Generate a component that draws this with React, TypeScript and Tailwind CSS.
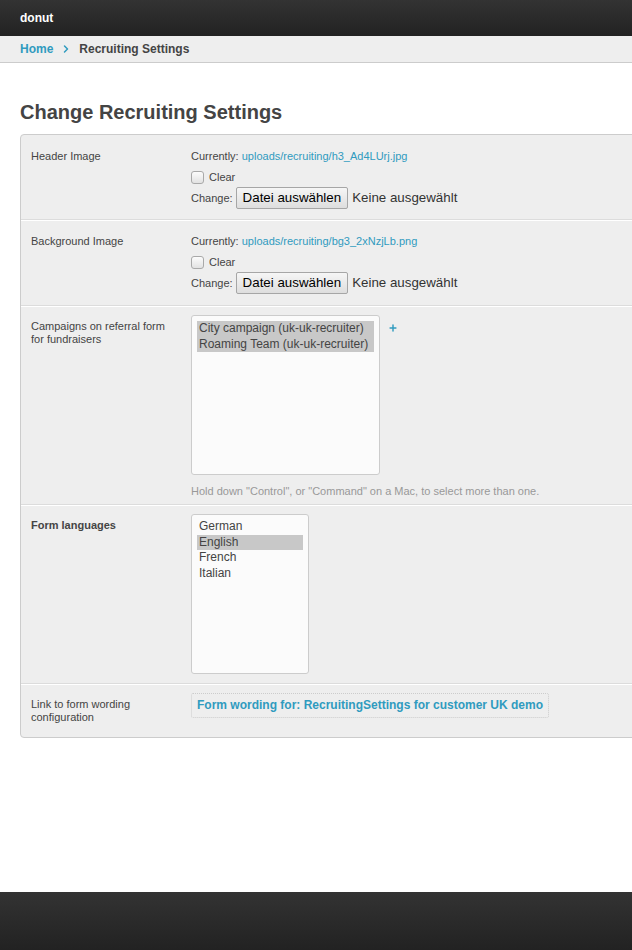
import { ChevronRight, Plus } from "lucide-react";

const font = { fontFamily: '"Liberation Sans", Arial, sans-serif' };

function Checkbox() {
    return <span className="inline-block w-[13px] h-[13px] rounded-[3px] border border-[#a9a9a9] bg-gradient-to-b from-[#fcfcfc] to-[#e2e2e2] mr-[5px]" />;
}

function FileInput() {
    return (
        <div className="flex items-center text-[11px] text-[#444]">
            <span className="mr-[3px]">Change:</span>
            <button className="h-[22px] px-[6px] border border-[#a6a6a6] rounded-[2px] bg-gradient-to-b from-[#f6f6f6] to-[#dedede] text-[13.33px] text-black leading-none">
                Datei auswählen
            </button>
            <span className="ml-[4px] text-[13.33px] text-[#333]">Keine ausgewählt</span>
        </div>
    );
}

function ImageRow({ label, file, first }: { label: string; file: string; first?: boolean }) {
    return (
        <div className={"flex px-[10px] border-b border-[#dcdcdc] " + (first ? "pt-[14px] pb-[10px]" : "pt-[13px] pb-[11px] border-t border-t-white")}>
            <div className="w-[160px] shrink-0 text-[11px] text-[#444] leading-[14px]">{label}</div>
            <div className="flex flex-col">
                <div className="text-[11px] leading-[14px] text-[#444]">
                    Currently: <a className="text-[#309bbf]">{file}</a>
                </div>
                <label className="flex items-center text-[11px] text-[#444] mt-[7px] h-[14px]">
                    <Checkbox />
                    Clear
                </label>
                <div className="mt-[3px]">
                    <FileInput />
                </div>
            </div>
        </div>
    );
}

function Option({ text, selected }: { text: string; selected?: boolean }) {
    return (
        <div className={"px-[2px] text-[12px] leading-[15.5px] text-[#444] whitespace-nowrap " + (selected ? "bg-[#c8c8c8]" : "")}>
            {text}
        </div>
    );
}

export default function App() {
    return (
        <div style={font} className="min-h-[950px] flex flex-col bg-white overflow-x-hidden">
            {/* top bar */}
            <header className="h-[36px] bg-gradient-to-b from-[#333] to-[#222] flex items-center px-5">
                <span className="text-white text-[12px] font-bold">donut</span>
            </header>

            {/* breadcrumbs */}
            <div className="h-[27px] bg-[#eee] border-b border-[#ccc] flex items-center px-5 text-[12px] font-bold">
                <a className="text-[#309bbf]">Home</a>
                <ChevronRight className="w-[12px] h-[12px] text-[#309bbf] mx-[7px]" strokeWidth={3} />
                <span className="text-[#444]">Recruiting Settings</span>
            </div>

            <main className="pl-5 pt-[37px]">
                <h1 className="text-[20px] font-bold text-[#444] leading-[24px]">Change Recruiting Settings</h1>

                <div className="mt-[10px] -mr-3 border border-[#ccc] rounded-[4px] bg-[#eee]">
                    <ImageRow first label="Header Image" file="uploads/recruiting/h3_Ad4LUrj.jpg" />
                    <ImageRow label="Background Image" file="uploads/recruiting/bg3_2xNzjLb.png" />

                    {/* campaigns */}
                    <div className="flex px-[10px] pt-[13px] pb-[6px] border-b border-[#dcdcdc] border-t border-t-white">
                        <div className="w-[160px] shrink-0 text-[11px] text-[#444] leading-[13px]">
                            Campaigns on referral form
                            <br />
                            for fundraisers
                        </div>
                        <div className="-mt-[5px]">
                            <div className="flex items-start">
                                <div className="w-[189px] h-[160px] border border-[#ccc] rounded-[3px] bg-[#fbfbfb] px-[5px] pt-[5px]">
                                    <Option text="City campaign (uk-uk-recruiter)" selected />
                                    <Option text="Roaming Team (uk-uk-recruiter)" selected />
                                </div>
                                <Plus className="w-[10px] h-[10px] text-[#309bbf] ml-[8px] mt-[8px]" strokeWidth={3.5} />
                            </div>
                            <p className="text-[11px] text-[#999] mt-[9px] leading-[14px]">
                                Hold down "Control", or "Command" on a Mac, to select more than one.
                            </p>
                        </div>
                    </div>

                    {/* languages */}
                    <div className="flex px-[10px] pt-[13px] pb-[9px] border-b border-[#dcdcdc] border-t border-t-white">
                        <div className="w-[160px] shrink-0 text-[11px] font-bold text-[#444] leading-[13px]">Form languages</div>
                        <div className="-mt-[5px] w-[118px] h-[160px] border border-[#ccc] rounded-[3px] bg-[#fbfbfb] px-[5px] pt-[4px]">
                            <Option text="German" />
                            <Option text="English" selected />
                            <Option text="French" />
                            <Option text="Italian" />
                        </div>
                    </div>

                    {/* form wording */}
                    <div className="flex px-[10px] pt-[13px] pb-[13px] border-t border-white">
                        <div className="w-[160px] shrink-0 text-[11px] text-[#444] leading-[13px]">
                            Link to form wording
                            <br />
                            configuration
                        </div>
                        <div className="-mt-[6px]">
                            <a className="inline-block border border-dotted border-[#ccc] rounded-[2px] px-[5px] h-[25px] leading-[23px] text-[12px] font-bold text-[#309bbf]">
                                Form wording for: RecruitingSettings for customer UK demo
                            </a>
                        </div>
                    </div>
                </div>
            </main>

            <footer className="mt-auto h-[58px] bg-gradient-to-b from-[#333] to-[#222]" />
        </div>
    );
}
